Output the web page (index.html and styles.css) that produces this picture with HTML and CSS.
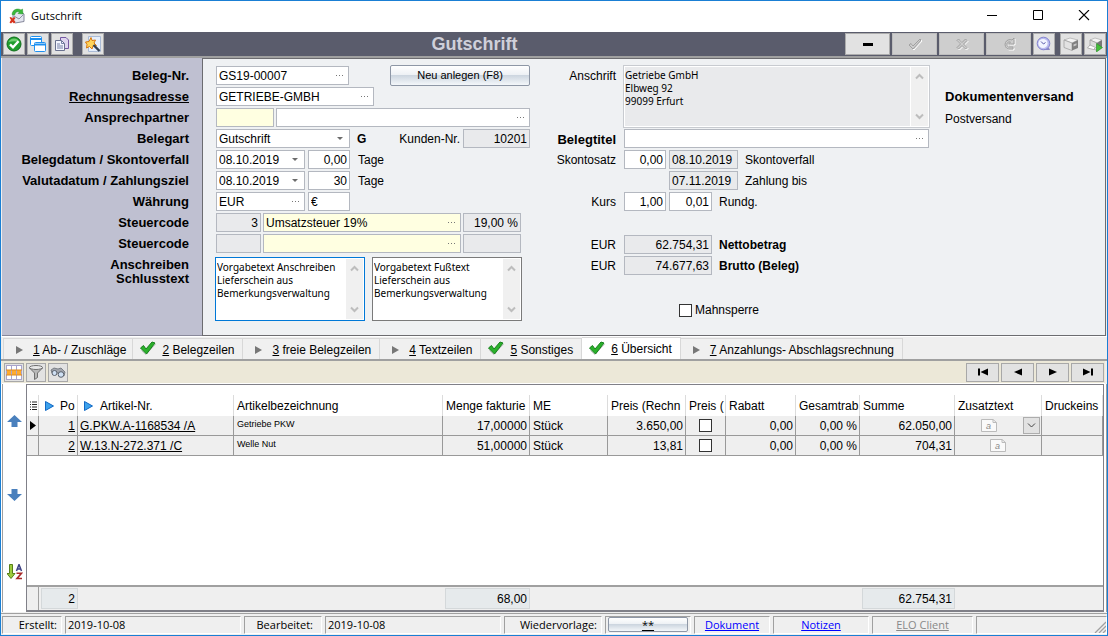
FILE: index.html
```html
<!DOCTYPE html>
<html lang="de">
<head>
<meta charset="utf-8">
<title>Gutschrift</title>
<link rel="stylesheet" href="styles.css">
</head>
<body>
<div class="window">
  <header class="titlebar">
    <svg class="app-icon" viewBox="0 0 16 16" width="16" height="16"><path d="M4 6l5-4 6 4v7.500l-9 1.500-2-2z" fill="#e3e5f0" stroke="#85879a"/><path d="M5 8l5 3 4.500-4.500" fill="none" stroke="#8d90a4"/><path d="M3 6.500C3.500 1 9 0 12 2l1.500-1 .5 5-5-.5 1.500-1.500C8 3 6.500 4 5.500 7z" fill="#3cb83c" stroke="#2a9430" stroke-width=".5"/><path d="M.5 9.500L2 9l1.500 1.500L5 9l1.500 1L5 12l1.500 2L5 15.500 3.500 14 2 15.500.5 14.500 2 12z" fill="#d8341e"/></svg>
    <span class="caption">Gutschrift</span>
    <button class="win-btn" aria-label="Minimieren"><svg viewBox="0 0 12 12" width="12" height="12"><path d="M1 5.500h10" stroke="#000"/></svg></button>
    <button class="win-btn" aria-label="Maximieren"><svg viewBox="0 0 12 12" width="12" height="12"><path d="M1.500 .5h9v9h-9z" fill="none" stroke="#000"/></svg></button>
    <button class="win-btn" aria-label="Schließen"><svg viewBox="0 0 12 12" width="12" height="12"><path d="M1 0l10 10M11 0L1 10" stroke="#000" stroke-width="1.100"/></svg></button>
  </header>

  <div class="toolbar">
    <button class="tool" aria-label="Übernehmen"><svg viewBox="0 0 16 16" width="16" height="16"><circle cx="8" cy="8" r="7" fill="#1f9d2c" stroke="#0d6e1a"/><path d="M2.500 6a6 6 0 0 1 11 0c-3-1-7-1-11 0z" fill="#6fce70"/><path d="M4 8.300l3 3 5.500-6" fill="none" stroke="#fff" stroke-width="2.400"/></svg></button>
    <button class="tool" aria-label="Fenster"><svg viewBox="0 0 16 16" width="16" height="16"><path d="M.5 1.500q0-1 1-1h9q1 0 1 1v8h-10q-1 0-1-1z" fill="#fff" stroke="#1e90f0"/><path d="M1 3h11" stroke="#1e90f0" stroke-width="2"/><path d="M4.500 7.500q0-1 1-1h9q1 0 1 1v7q0 1-1 1h-9q-1 0-1-1z" fill="#fff" stroke="#1e90f0"/><path d="M5 8.500h10" stroke="#1e90f0" stroke-width="2"/></svg></button>
    <button class="tool" aria-label="Kopieren"><svg viewBox="0 0 16 16" width="16" height="16"><path d="M6.500 1.500h5.500l2.500 2.500v8.500h-8z" fill="#ddd4ee" stroke="#7458a2"/><path d="M1.500 4.500h6l3 3v7h-9z" fill="#f4f6ff" stroke="#69718e"/><path d="M7.500 4.500v3h3M3 8h3M3 10h6M3 12h6" fill="none" stroke="#7580a6"/></svg></button>
    <button class="tool tool-gap" aria-label="Assistent"><svg viewBox="0 0 16 16" width="16" height="16"><path d="M3.500.5h12v15h-12z" fill="#e6effc" stroke="#aabbd6"/><path d="M6 1.500l1 3 3.500-.5-1.500 3 2.500 2.500-3.500.5-1 3-2.500-2.500L1.500 12l.5-3.500L.5 6l3.500-.500z" fill="#ffd45a" stroke="#d8780f"/><path d="M8.500 9l6 6" stroke="#344052" stroke-width="2.400"/></svg></button>
    <h1>Gutschrift</h1>
    <button class="tool wide" aria-label="Löschen"><svg viewBox="0 0 16 16" width="16" height="16"><path d="M3 7h10v3H3z"/></svg></button>
    <button class="tool wide off" aria-label="Bestätigen" disabled><svg viewBox="0 0 16 16" width="16" height="16"><path d="M2 9l2-1.500 2 2.500 7-7 1 1-8 9z" fill="none" stroke="#fff" transform="translate(1 1)"/><path d="M2 9l2-1.500 2 2.500 7-7 1 1-8 9z" fill="#cecece" stroke="#a0a0a0"/></svg></button>
    <button class="tool wide off" aria-label="Abbrechen" disabled><svg viewBox="0 0 16 16" width="16" height="16"><path d="M3 4.500L4.500 3 8 6.500 11.500 3 13 4.500 9.500 8l3.500 3.500-1.500 1.500L8 9.500 4.500 13 3 11.500 6.500 8z" fill="none" stroke="#fff" transform="translate(1 1)"/><path d="M3 4.500L4.500 3 8 6.500 11.500 3 13 4.500 9.500 8l3.500 3.500-1.500 1.500L8 9.500 4.500 13 3 11.500 6.500 8z" fill="#cecece" stroke="#a0a0a0"/></svg></button>
    <button class="tool wide off" aria-label="Aktualisieren" disabled><svg viewBox="0 0 16 16" width="16" height="16"><path d="M12 13H7a4.500 4.500 0 1 1 4-9l2-2v6H7.500l2-2a2.500 2.500 0 1 0-2 5H12z" fill="none" stroke="#fff" transform="translate(1 1)"/><path d="M12 13H7a4.500 4.500 0 1 1 4-9l2-2v6H7.500l2-2a2.500 2.500 0 1 0-2 5H12z" fill="#cecece" stroke="#a0a0a0"/></svg></button>
    <button class="tool" aria-label="Wiedervorlage"><svg viewBox="0 0 16 16" width="16" height="16"><path d="M7 14h7l-1-2h-5z" fill="#8886c2"/><circle cx="7.500" cy="7.500" r="6.300" fill="#b9bbee" stroke="#8584d0"/><circle cx="7" cy="7.500" r="4.600" fill="#f2f5ff"/><path d="M5 5.500l2.500 2.500 2-1.500" fill="none" stroke="#5658a8"/></svg></button>
    <button class="tool printer" aria-label="Drucken"><svg viewBox="0 0 16 16" width="16" height="16"><path d="M1 4l6-2 8 2-6 3z" fill="#f4f4f4" stroke="#aaa" stroke-width=".7"/><path d="M1 4l8 3v7.500l-8-3z" fill="#e2e2e2" stroke="#999" stroke-width=".7"/><path d="M9 7l6-3v8l-6 2.500z" fill="#808080"/><path d="M10.500 8.500l3-1.300v2l-3 1.300z" fill="#c8c8c8"/></svg></button>
    <button class="tool" aria-label="Druckvorschau"><svg viewBox="0 0 16 16" width="16" height="16"><path d="M3 4l5-2 7 2-5 3z" fill="#f4f4f4" stroke="#aaa" stroke-width=".7"/><path d="M3 4l7 3v7.500l-7-3z" fill="#dcdcdc" stroke="#999" stroke-width=".7"/><path d="M10 7l5-3v8l-5 2.500z" fill="#777"/><path d="M3 9l-2.500 3 6 1.500 2-2z" fill="#fff" stroke="#999" stroke-width=".7"/><path d="M9.500 7.500l6 4-6 4.500z" fill="#44c03a" stroke="#2a8f26" stroke-width=".6"/></svg></button>
  </div>

  <main class="form">
    <div class="labels">
      <label for="beleg">Beleg-Nr.</label>
      <label for="adresse"><u>Rechnungsadresse</u></label>
      <label for="partner">Ansprechpartner</label>
      <label for="art">Belegart</label>
      <label for="datum">Belegdatum / Skontoverfall</label>
      <label for="valuta">Valutadatum / Zahlungsziel</label>
      <label for="waehrung">Währung</label>
      <label for="steuer1">Steuercode</label>
      <label for="steuer2">Steuercode</label>
      <div class="label-pair"><label for="anschreiben">Anschreiben</label><label for="schluss">Schlusstext</label></div>
    </div>
    <div class="fields">
      <div class="col-main">
        <div class="row"><span class="field w-133"><input id="beleg" value="GS19-00007"><button class="dots" aria-label="Auswahl"></button></span><button class="glass new">Neu anlegen (F8)</button></div>
        <div class="row"><span class="field w-158"><input id="adresse" value="GETRIEBE-GMBH"><button class="dots" aria-label="Auswahl"></button></span></div>
        <div class="row tight"><span class="field yellow w-58"><input id="partner"></span><span class="field grow"><input aria-label="Name Ansprechpartner"><button class="dots" aria-label="Auswahl"></button></span></div>
        <div class="row"><span class="field drop w-134"><select id="art"><option>Gutschrift</option></select></span><span class="code">G</span><label class="kunde" for="kunde">Kunden-Nr.</label><span class="field gray w-67"><input id="kunde" class="num" value="10201" readonly></span></div>
        <div class="row"><span class="field drop w-89"><select id="datum"><option>08.10.2019</option></select></span><span class="field w-42"><input class="num" id="tage1" value="0,00"></span><label class="after" for="tage1">Tage</label></div>
        <div class="row"><span class="field drop w-89"><select id="valuta"><option>08.10.2019</option></select></span><span class="field w-42"><input class="num" id="tage2" value="30"></span><label class="after" for="tage2">Tage</label></div>
        <div class="row"><span class="field w-89"><input id="waehrung" value="EUR"><button class="dots" aria-label="Auswahl"></button></span><span class="field w-42"><input aria-label="Symbol" value="€"></span></div>
        <div class="row tight"><span class="field gray w-45"><input class="num" id="steuer1" value="3" readonly></span><span class="field yellow w-198"><input aria-label="Steuertext" value="Umsatzsteuer 19%"><button class="dots" aria-label="Auswahl"></button></span><span class="field gray w-58"><input class="num" aria-label="Steuersatz" value="19,00 %" readonly></span></div>
        <div class="row tight"><span class="field gray w-45"><input id="steuer2" readonly></span><span class="field yellow w-198"><input aria-label="Steuertext"><button class="dots" aria-label="Auswahl"></button></span><span class="field gray w-58"><input aria-label="Steuersatz" readonly></span></div>
        <div class="memos">
          <div class="memo focus"><textarea id="anschreiben">Vorgabetext Anschreiben
Lieferschein aus
Bemerkungsverwaltung</textarea><div class="scroll"><svg viewBox="0 0 9 7" width="9" height="7"><path d="M1 5.500l3.500-3.500L8 5.500"/></svg><svg viewBox="0 0 9 7" width="9" height="7"><path d="M1 1.500l3.500 3.500L8 1.500"/></svg></div></div>
          <div class="memo"><textarea id="schluss">Vorgabetext Fußtext
Lieferschein aus
Bemerkungsverwaltung</textarea><div class="scroll"><svg viewBox="0 0 9 7" width="9" height="7"><path d="M1 5.500l3.500-3.500L8 5.500"/></svg><svg viewBox="0 0 9 7" width="9" height="7"><path d="M1 1.500l3.500 3.500L8 1.500"/></svg></div></div>
        </div>
      </div>
      <div class="col-side">
        <div class="row address"><label class="lead" for="anschrift">Anschrift</label><div class="memo readonly"><textarea id="anschrift" readonly>Getriebe GmbH
Elbweg 92
99099 Erfurt</textarea><div class="scroll"><svg viewBox="0 0 9 7" width="9" height="7"><path d="M1 5.500l3.500-3.500L8 5.500"/></svg><svg viewBox="0 0 9 7" width="9" height="7"><path d="M1 1.500l3.500 3.500L8 1.500"/></svg></div></div></div>
        <div class="row"><label class="lead bold" for="titel">Belegtitel</label><span class="field grow"><input id="titel"><button class="dots" aria-label="Auswahl"></button></span></div>
        <div class="row"><label class="lead" for="skonto">Skontosatz</label><span class="field w-42"><input class="num" id="skonto" value="0,00"></span><span class="field gray w-69"><input id="verfall" value="08.10.2019" readonly></span><label class="near" for="verfall">Skontoverfall</label></div>
        <div class="row"><span class="lead"></span><span class="w-42"></span><span class="field gray w-69"><input id="zahlung" value="07.11.2019" readonly></span><label class="near" for="zahlung">Zahlung bis</label></div>
        <div class="row"><label class="lead" for="kurs">Kurs</label><span class="field w-42"><input class="num" id="kurs" value="1,00"></span><span class="field w-43"><input class="num" id="rundg" value="0,01"></span><label class="near" for="rundg">Rundg.</label></div>
        <div class="row totals"><span class="lead">EUR</span><span class="field gray w-88"><input class="num" id="netto" value="62.754,31" readonly></span><label class="near strong" for="netto">Nettobetrag</label></div>
        <div class="row"><span class="lead">EUR</span><span class="field gray w-88"><input class="num" id="brutto" value="74.677,63" readonly></span><label class="near strong" for="brutto">Brutto (Beleg)</label></div>
        <label class="lock"><input type="checkbox"> Mahnsperre</label>
      </div>
      <div class="dispatch"><strong>Dokumentenversand</strong><span>Postversand</span></div>
    </div>
  </main>

  <nav class="tabs" role="tablist">
    <button class="tab" role="tab"><i class="arrow"></i><span><u>1</u> Ab- / Zuschläge</span></button>
    <button class="tab" role="tab"><svg class="check" viewBox="0 0 17 14" width="17" height="14"><path d="M2.500 9.500L7 13.500 16.500 3" fill="none" stroke="#bbb"/><path d="M1.500 7L4.500 4.500 7 8 13 1l3 1-8.500 11z" fill="#2bb12b" stroke="#17801c"/></svg><span><u>2</u> Belegzeilen</span></button>
    <button class="tab" role="tab"><i class="arrow"></i><span><u>3</u> freie Belegzeilen</span></button>
    <button class="tab" role="tab"><i class="arrow"></i><span><u>4</u> Textzeilen</span></button>
    <button class="tab" role="tab"><svg class="check" viewBox="0 0 17 14" width="17" height="14"><path d="M2.500 9.500L7 13.500 16.500 3" fill="none" stroke="#bbb"/><path d="M1.500 7L4.500 4.500 7 8 13 1l3 1-8.500 11z" fill="#2bb12b" stroke="#17801c"/></svg><span><u>5</u> Sonstiges</span></button>
    <button class="tab active" role="tab" aria-selected="true"><svg class="check" viewBox="0 0 17 14" width="17" height="14"><path d="M2.500 9.500L7 13.500 16.500 3" fill="none" stroke="#bbb"/><path d="M1.500 7L4.500 4.500 7 8 13 1l3 1-8.500 11z" fill="#2bb12b" stroke="#17801c"/></svg><span><u>6</u> Übersicht</span></button>
    <button class="tab" role="tab"><i class="arrow"></i><span><u>7</u> Anzahlungs- Abschlagsrechnung</span></button>
  </nav>

  <div class="gridbar">
    <button class="mini" aria-label="Tabelle"><svg viewBox="0 0 16 15" width="16" height="15"><path d="M0 0h16v15H0z" fill="#fff"/><path d="M0 5h16v5H0z" fill="#ffab2e"/><path d="M0 .5h16M0 14.500h16M.5 0v15M5.500 0v15M10.500 0v15M15.500 0v15" stroke="#a9a4cc"/><path d="M0 5h16M0 10h16" stroke="#e08a1c"/></svg></button>
    <button class="mini" aria-label="Filter"><svg viewBox="0 0 16 15" width="16" height="15"><path d="M1.500 3l5 5v6.500l3-2V8l5-5z" fill="#b8b8b8" stroke="#707070"/><ellipse cx="8" cy="2.500" rx="6.500" ry="2" fill="#e8e8e8" stroke="#707070"/></svg></button>
    <button class="mini" aria-label="Suchen"><svg viewBox="0 0 16 15" width="16" height="15"><path d="M1 5l3-2 4 1 3-1 4 4-1 4-4-3-4 0-4 0z" fill="#a2a6ae" stroke="#6a6e76" stroke-width=".8"/><circle cx="4.500" cy="8" r="2.500" fill="#cfe0f4" stroke="#5a616d"/><circle cx="11" cy="9.500" r="2.800" fill="#cfe0f4" stroke="#5a616d"/></svg></button>
    <span class="grow"></span>
    <button class="nav" aria-label="Erster"><svg viewBox="0 0 12 8" width="12" height="8"><path d="M1 .5h2v7H1zM11 .5v7L3.500 4z"/></svg></button>
    <button class="nav" aria-label="Zurück"><svg viewBox="0 0 12 8" width="12" height="8"><path d="M10 .5v7L2 4z"/></svg></button>
    <button class="nav" aria-label="Weiter"><svg viewBox="0 0 12 8" width="12" height="8"><path d="M2 .5v7L10 4z"/></svg></button>
    <button class="nav" aria-label="Letzter"><svg viewBox="0 0 12 8" width="12" height="8"><path d="M9 .5h2v7H9zM1 .5v7L8.500 4z"/></svg></button>
  </div>

  <section class="content">
    <aside class="side">
      <button class="flat" aria-label="Nach oben"><svg viewBox="0 0 15 12" width="15" height="12"><path d="M7.500 0L15 7h-4.500v5h-6V7H0z" fill="#4a80bd"/></svg></button>
      <button class="flat down" aria-label="Nach unten"><svg viewBox="0 0 15 12" width="15" height="12"><path d="M7.500 12L15 5h-4.500V0h-6v5H0z" fill="#4a80bd"/></svg></button>
      <button class="flat sort" aria-label="Sortieren"><svg viewBox="0 0 16 16" width="16" height="16"><path d="M2.500.5h3v9h2.500l-4 5-4-5h2.500z" fill="#9ccc3c" stroke="#587f1a"/><path d="M9.500 7l2.500-6.500 2.500 6.500M10.500 5h3.500" fill="none" stroke="#3d4284" stroke-width="1.500"/><path d="M9.500 9.300h5L10 14.500h5" fill="none" stroke="#a82a2a" stroke-width="1.600"/></svg></button>
    </aside>
    <div class="sheet">
      <table class="lines">
        <colgroup><col class="c-mark"><col class="c-po"><col class="c-art"><col><col class="c-menge"><col class="c-me"><col class="c-preis"><col class="c-flag"><col class="c-rabatt"><col class="c-gesamt"><col class="c-summe"><col class="c-zusatz"><col class="c-druck"></colgroup>
        <thead><tr>
          <th class="mark"><svg viewBox="0 0 7 10" width="7" height="10"><path d="M0 1h1M2 1h5M0 3.500h1M2 3.500h5M0 6h1M2 6h5M0 8.500h1M2 8.500h5" stroke="#222" stroke-width="1.200"/></svg></th>
          <th class="po"><span class="sorted"><svg viewBox="0 0 9 10" width="9" height="10"><path d="M.5.500L8.500 5l-8 4.500z" fill="#3da2ec" stroke="#1268c4"/></svg>Po</span></th>
          <th><span class="sorted"><svg viewBox="0 0 9 10" width="9" height="10"><path d="M.5.500L8.500 5l-8 4.500z" fill="#3da2ec" stroke="#1268c4"/></svg>Artikel-Nr.</span></th>
          <th>Artikelbezeichnung</th><th>Menge fakturie</th><th>ME</th><th>Preis (Rechn</th><th>Preis (</th><th>Rabatt</th><th>Gesamtrab</th><th>Summe</th><th>Zusatztext</th><th>Druckeins</th>
        </tr></thead>
        <tbody>
          <tr><td class="mark"><svg viewBox="0 0 6 9" width="6" height="9"><path d="M0 0l6 4.500L0 9z"/></svg></td><td class="num"><u>1</u></td><td><a href="#">G.PKW.A-1168534 /A</a></td><td class="desc">Getriebe PKW</td><td class="num">17,00000</td><td>Stück</td><td class="num">3.650,00</td><td class="mid"><input type="checkbox" aria-label="Preis"></td><td class="num">0,00</td><td class="num">0,00 %</td><td class="num">62.050,00</td><td class="mid"><div class="note"><svg viewBox="0 0 16 13" width="16" height="13"><path d="M.5.500h11.500l3.500 3v9H.5z" fill="#fafafa" stroke="#bbb"/><path d="M12 .5v3h3.500" fill="none" stroke="#bbb"/><text x="5" y="10" class="glyph">a</text></svg><button class="open" aria-label="Zusatztext öffnen"><svg viewBox="0 0 9 7" width="9" height="7"><path d="M1 1.500l3.500 3.500L8 1.500" fill="none" stroke="#444"/></svg></button></div></td><td></td></tr>
          <tr><td class="mark"></td><td class="num"><u>2</u></td><td><a href="#">W.13.N-272.371 /C</a></td><td class="desc">Welle Nut</td><td class="num">51,00000</td><td>Stück</td><td class="num">13,81</td><td class="mid"><input type="checkbox" aria-label="Preis"></td><td class="num">0,00</td><td class="num">0,00 %</td><td class="num">704,31</td><td class="mid"><div class="note single"><svg viewBox="0 0 16 13" width="16" height="13"><path d="M.5.500h11.500l3.500 3v9H.5z" fill="#fafafa" stroke="#bbb"/><path d="M12 .5v3h3.500" fill="none" stroke="#bbb"/><text x="5" y="10" class="glyph">a</text></svg></div></td><td></td></tr>
        </tbody>
      </table>
      <table class="sums">
        <colgroup><col class="c-mark"><col class="c-po"><col class="c-art"><col><col class="c-menge"><col class="c-me"><col class="c-preis"><col class="c-flag"><col class="c-rabatt"><col class="c-gesamt"><col class="c-summe"><col class="c-zusatz"><col class="c-druck"></colgroup>
        <tbody><tr><td class="first"></td><td><output>2</output></td><td></td><td></td><td><output>68,00</output></td><td></td><td></td><td></td><td></td><td></td><td><output>62.754,31</output></td><td></td><td></td></tr></tbody>
      </table>
    </div>
  </section>

  <footer class="status">
    <span class="pane right s-60">Erstellt:</span>
    <span class="pane s-176">2019-10-08</span>
    <span class="pane right s-78">Bearbeitet:</span>
    <span class="pane s-176">2019-10-08</span>
    <span class="pane right s-98">Wiedervorlage:</span>
    <span class="pane s-86"><button class="glass"><u>**</u></button></span>
    <span class="pane center s-77"><a href="#">Dokument</a></span>
    <span class="pane center s-96"><a href="#">Notizen</a></span>
    <span class="pane center s-101"><a class="disabled" href="#">ELO Client</a></span>
    <span class="pane grow grip"><svg viewBox="0 0 12 12" width="12" height="12"><path d="M1 12L12 1M5 12l7-7M9 12l3-3" stroke="#a0a0a0" stroke-width="1.300"/></svg></span>
  </footer>
</div>
</body>
</html>
```
FILE: styles.css
```css
* { box-sizing: border-box; }

body {
  margin: 0;
  font: 12px/15px "Liberation Sans", Arial, sans-serif;
  color: #000;
}

button, input, select, textarea { font: inherit; color: inherit; margin: 0; padding: 0; }
button { border: 0; background: none; }
svg { display: block; flex: none; }
.grow { flex: 1; min-width: 0; }

.window {
  display: flex;
  flex-direction: column;
  min-height: 100vh;
  border: 1px solid #1a7fd4;
  background: #efefef;
}

/* Title bar */
.titlebar { display: flex; align-items: center; height: 31px; padding: 0 0 2px 8px; background: #fff; }
.caption { flex: 1; padding-left: 6px; font: 11px/16px "Open Sans", sans-serif; }
.win-btn { display: flex; align-items: center; justify-content: center; width: 46px; height: 29px; }

/* Main toolbar */
.toolbar {
  display: flex;
  align-items: center;
  gap: 2px;
  height: 26px;
  padding: 0 1px 0 2px;
  background: #5a5c6c;
  border-bottom: 2px solid #a0a0a0;
}
.toolbar h1 { flex: 1; margin: 0; text-align: center; font-size: 18px; line-height: 22px; color: #cfd0da; }
.tool {
  display: flex;
  align-items: center;
  justify-content: center;
  width: 22px;
  height: 22px;
  background: #e2e2e2;
  border: 1px solid #acacac;
}
.tool-gap { margin-left: 7px; }
.tool.wide { width: 45px; }
.tool.off { background: #cecece; border-color: #bdbdbd; }
.tool.printer { margin-left: 3px; }

/* Form */
.form { display: flex; padding: 0 1px; border-bottom: 1px solid #fff; }
.labels {
  display: flex;
  flex-direction: column;
  gap: 2px;
  width: 200px;
  padding: 8px 13px 14px 0;
  background: #bfc0d1;
  border-bottom: 1px solid #88889a;
  text-align: right;
  font-size: 13px;
  font-weight: bold;
}
.labels label { line-height: 19px; }
.label-pair { display: flex; flex-direction: column; padding-top: 3px; }
.label-pair label { line-height: 14px; }

.fields {
  display: flex;
  flex: 1;
  padding: 7px 12px 14px 13px;
  background: #eff1f3;
  border: 1px solid #6c6c70;
}
.col-main { display: flex; flex-direction: column; gap: 2px; width: 314px; }
.row { display: flex; align-items: center; gap: 3px; height: 19px; }
.row.tight { gap: 2px; }
.row label, .code, .lead { padding-top: 1px; }

.field { position: relative; display: flex; height: 19px; border: 1px solid #b4b8c0; background: #fff; }
.field input, .field select {
  flex: 1;
  min-width: 0;
  width: 100%;
  padding: 1px 2px 0;
  border: 0;
  outline: 0;
  background: transparent;
  appearance: none;
}
.field .num { text-align: right; }
.yellow { background: #ffffe1; }
.gray { background: #e9eaec; }
.dots { position: absolute; right: 3px; top: 0; width: 10px; height: 17px; }
.dots::after {
  content: "";
  position: absolute;
  left: 1px;
  top: 8px;
  width: 1px;
  height: 1px;
  background: #777;
  box-shadow: 3px 0 #777, 6px 0 #777;
}
.drop::after {
  content: "";
  position: absolute;
  right: 6px;
  top: 7px;
  border: 3px solid transparent;
  border-top-color: #6c6c6c;
  border-bottom: 0;
  pointer-events: none;
}

.w-42 { width: 42px; } .w-43 { width: 43px; } .w-45 { width: 45px; } .w-58 { width: 58px; }
.w-67 { width: 67px; } .w-69 { width: 69px; } .w-88 { width: 88px; } .w-89 { width: 89px; }
.w-133 { width: 133px; } .w-134 { width: 134px; } .w-158 { width: 158px; } .w-198 { width: 198px; }

.glass {
  border: 1px solid #8e97a6;
  border-radius: 2px;
  background: linear-gradient(#fff 0%, #eef1f5 45%, #cdd6e0 50%, #f4f7fa 100%);
}
.new { width: 140px; height: 21px; margin-left: auto; font-size: 11px; }
.code { margin-left: 4px; font-weight: bold; }
.kunde { margin-left: auto; }
.after { margin-left: 5px; }

.memos { display: flex; gap: 7px; width: 307px; padding-top: 2px; margin-left: -1px; }
.memo { display: flex; flex: 1; height: 64px; padding: 1px; border: 1px solid #7a7a7a; background: #fff; }
.memo.focus { border-color: #0078d7; }
.memo.readonly { height: 63px; background: #fff; border-color: #c8cbd0; }
.memo textarea {
  flex: 1;
  min-width: 0;
  padding: 2px 0 0;
  border: 0;
  outline: 0;
  resize: none;
  overflow: hidden;
  white-space: pre;
  background: transparent;
  font: 10px/13px "Noto Sans", sans-serif;
}
.readonly textarea { background: #e9eaec; }
.scroll {
  display: flex;
  flex-direction: column;
  justify-content: space-between;
  align-items: center;
  width: 17px;
  padding: 6px 0;
  background: #f0f0f0;
}
.readonly .scroll { margin-left: 1px; }
.scroll path { fill: none; stroke: #bdbdbd; stroke-width: 2; }

.col-side { display: flex; flex-direction: column; gap: 2px; width: 399px; }
.lead { width: 90px; padding-right: 4px; margin-right: 1px; text-align: right; flex: none; }
.bold { font-size: 13px; font-weight: bold; }
.strong { font-weight: bold; }
.near { margin-left: 4px; }
.address { height: 61px; align-items: flex-start; gap: 2px; }
.address .lead { line-height: 19px; }
.address .memo { margin: -1px -1px 0 0; }
.totals { margin-top: 22px; }
.lock { display: flex; align-items: center; gap: 3px; margin: 26px 0 0 149px; }

input[type="checkbox"] {
  appearance: none;
  flex: none;
  width: 13px;
  height: 13px;
  border: 1px solid #333;
  background: #fff;
}

.dispatch { display: flex; flex-direction: column; gap: 2px; padding: 21px 0 0 16px; line-height: 20px; }
.dispatch strong { font-size: 13px; }

/* Tabs */
.tabs { display: flex; align-items: flex-end; height: 24px; padding: 0 2px; border-bottom: 2px solid #a0a0a0; }
.tab {
  display: flex;
  align-items: center;
  height: 21px;
  padding: 2px 8px 0 6px;
  border: 1px solid #d8d8d8;
  border-width: 1px 1px 0 0;
  background: #f0f0f0;
  white-space: nowrap;
}
.tab:first-child { padding-right: 6px; border-left-width: 1px; }
.tab.active { height: 22px; background: #fff; }
.tab span { margin-left: 6px; }
.check { margin-top: -4px; }
.arrow { width: 17px; height: 8px; }
.arrow::before {
  content: "";
  display: block;
  width: 0;
  margin-left: 6px;
  border: 4px solid transparent;
  border-left: 7px solid #777;
  border-right: 0;
}

/* Grid toolbar */
.gridbar {
  display: flex;
  align-items: center;
  gap: 2px;
  height: 23px;
  margin: 0 2px 0 1px;
  padding: 0 1px 0 2px;
  background: #ece8d8;
  border-bottom: 1px solid #fff;
}
.mini, .nav { display: flex; align-items: center; justify-content: center; height: 19px; background: #e2e2e2; border: 1px solid #a8a8a8; }
.mini { width: 20px; }
.nav { width: 33px; }

/* Grid */
.content { display: flex; flex: 1; padding: 0 2px 0 1px; border-right: 1px solid #a0a0a0; background: #fff; }
.side { display: flex; flex-direction: column; align-items: center; width: 24px; padding: 31px 0 32px; border-left: 1px solid #a0a0a0; }
.down { margin-top: 62px; }
.sort { margin-top: auto; }
.sheet {
  display: flex;
  flex: 1;
  flex-direction: column;
  justify-content: space-between;
  min-width: 0;
  border: 1px solid #808088;
  border-bottom-width: 2px;
}
table { width: 100%; table-layout: fixed; border-collapse: separate; border-spacing: 0; }
.lines { margin-top: 10px; }
th, td { padding: 1px 0 0 3px; text-align: left; font-weight: normal; white-space: nowrap; overflow: hidden; }
th { height: 21px; border-right: 1px solid #dcdcdc; }
.lines td { height: 20px; background: #efefef; border-right: 1px solid #999; border-bottom: 1px solid #999; }
.lines .num { text-align: right; padding-right: 2px; }
.lines .mark { padding: 0 0 0 3px; }
.lines td.mid { padding: 0; text-align: center; }
.lines .mid input { display: block; margin: 0 auto; }
.lines td.desc { vertical-align: top; font-size: 9px; line-height: 14px; }
.lines td a { color: #000; margin-left: -1px; }
.sorted { display: flex; align-items: center; gap: 7px; padding-left: 3px; }
.po .sorted { gap: 6px; }
.note { display: flex; align-items: center; justify-content: space-between; padding: 0 1px 0 26px; }
.note.single { justify-content: center; padding: 0; }
.open { display: flex; align-items: center; justify-content: center; width: 17px; height: 17px; background: #e2e2e2; border: 1px solid #adadad; }
.glyph { font: italic 9px "Liberation Sans", sans-serif; fill: #888; }

.c-mark { width: 12px; } .c-po { width: 39px; } .c-art { width: 156px; } .c-menge { width: 87px; }
.c-me { width: 78px; } .c-preis { width: 78px; } .c-flag { width: 40px; } .c-rabatt { width: 70px; }
.c-gesamt { width: 64px; } .c-summe { width: 95px; } .c-zusatz { width: 87px; } .c-druck { width: 61px; }

.sums { background: #efefef; border-top: 2px solid #a0a0a0; }
.sums td { height: 23px; padding: 0 0 0 2px; }
.sums .first { border-right: 1px solid #a0a0a0; }
.sums output { display: block; height: 21px; padding-right: 2px; line-height: 20px; text-align: right; background: #e6eaec; border: 1px solid #d4d8da; }

/* Status bar */
.status {
  display: flex;
  gap: 3px;
  height: 22px;
  margin-top: 1px;
  padding: 2px 0 1px 1px;
  border-top: 1px solid #a0a0a0;
  font: 11px/16px "Open Sans", sans-serif;
}
.pane { display: block; flex: none; height: 18px; padding: 0 2px; border: 1px solid; border-color: #a0a0a0 #fff #fff #a0a0a0; white-space: nowrap; }
.pane.grow { flex: 1; }
.pane.right { text-align: right; padding-right: 4px; }
.pane.center { text-align: center; }
.pane a { color: #00f; }
.pane a.disabled { color: #888; }
.pane .glass { display: block; width: 100%; height: 15px; line-height: 13px; }
.pane.grip { display: flex; justify-content: flex-end; align-items: flex-end; padding: 0; }
.s-60 { width: 60px; } .s-176 { width: 176px; } .s-78 { width: 78px; } .s-98 { width: 98px; }
.pane.s-78 { padding-right: 8px; }
.s-86 { width: 86px; } .s-77 { width: 76px; } .s-96 { width: 96px; } .s-101 { width: 101px; }
```
